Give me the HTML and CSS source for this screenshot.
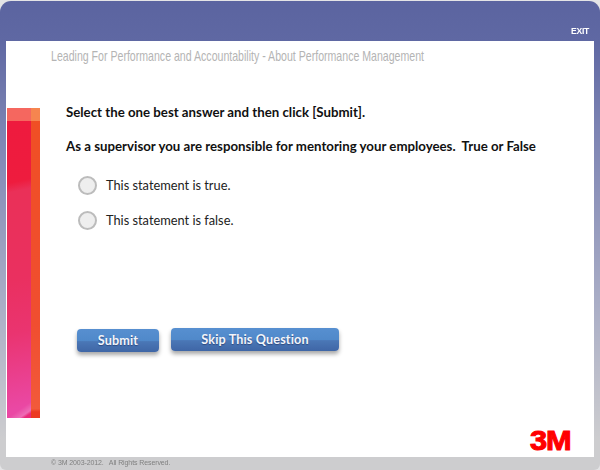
FILE: index.html
```html
<!DOCTYPE html>
<html lang="en">
<head>
<meta charset="utf-8">
<title>About Performance Management</title>
<link rel="stylesheet" href="styles.css">
</head>
<body>
<div class="frame">
  <header class="topbar"><a class="exit">EXIT</a></header>
  <main class="panel">
    <h1 class="course">Leading For Performance and Accountability - About Performance Management</h1>
    <div class="stage">
      <div class="ribbon"><div class="ribbon-main"></div><div class="ribbon-edge"></div></div>
      <section class="quiz">
        <p class="prompt">Select the one best answer and then click [Submit].</p>
        <p class="prompt question">As a supervisor you are responsible for mentoring your employees.&nbsp; True or False</p>
        <div class="options">
          <label class="option"><span class="radio"></span>This statement is true.</label>
          <label class="option"><span class="radio"></span>This statement is false.</label>
        </div>
        <div class="actions">
          <button class="btn btn-submit">Submit</button>
          <button class="btn btn-skip">Skip This Question</button>
        </div>
      </section>
    </div>
    <div class="logo">3M</div>
  </main>
  <footer class="foot">© 3M 2003-2012.&nbsp;&nbsp; All Rights Reserved.</footer>
</div>
</body>
</html>
```

FILE: styles.css
```css
html, body { margin: 0; padding: 0; background: #e4e4e6; }
.frame {
  width: 600px; height: 469px; margin-top: 1px;
  display: flex; flex-direction: column;
  border-radius: 11px 11px 6px 6px; overflow: hidden;
  background: linear-gradient(180deg, #5b64a0 0, #5f68a3 40px, #7d84b3 130px, #a9adc6 300px, #cdcdcf 440px);
  filter: blur(0.35px);
}
.topbar { height: 40px; flex: none; display: flex; justify-content: flex-end; align-items: flex-end; padding: 0 11px 5px 0; box-sizing: border-box; }
.exit { font: 700 8.6px/10px "Liberation Sans", sans-serif; letter-spacing: -0.3px; color: #fff; }
.panel { position: relative; flex: none; height: 416px; margin: 0 6px; background: #fff; display: flex; flex-direction: column; }
.course { margin: 7px 0 0 45px; width: 511px; transform: scaleX(0.73); transform-origin: left center; white-space: nowrap; font: 400 14.5px/17px "Liberation Sans", sans-serif; color: #b4b4b4; }
.stage { display: flex; margin-top: 43px; }
.ribbon { flex: none; width: 33px; height: 310px; margin-left: 1px; display: flex; position: relative; }
.ribbon::after { content: ""; position: absolute; left: 0; right: 0; top: 0; height: 13px; background: rgba(255, 210, 140, 0.42); }
.ribbon-main { width: 24px; background:
  linear-gradient(145deg, transparent 0, transparent 95%, rgba(255,255,255,0.2) 97.5%, #ea2a7a 98.5%),
  linear-gradient(168deg, #ee1a3e 0, #ee1c3e 24%, #ea3058 27%, #ea3060 55%, #ea3470 72%, #ea48a4 96%); }
.ribbon-edge { width: 9px; background: linear-gradient(180deg, #f04f24 0, #f04e30 70%, #f25a3a 97%, #ec3a22 98%); }
.quiz { flex: 1; padding-left: 26px; margin-top: -5px; }
.prompt { margin: 0; font: 700 13.25px/18px "Lato", "Liberation Sans", sans-serif; color: #111; }
.question { margin-top: 16px; }
.options { display: flex; flex-direction: column; gap: 15px; margin: 20px 0 0 12px; }
.option { display: flex; align-items: center; gap: 9px; height: 20px; font: 400 12.8px/20px "Lato", "Liberation Sans", sans-serif; color: #222; }
.radio { width: 15px; height: 15px; border: 2px solid #bcbcbc; border-radius: 50%; background: #eeeeee; flex: none; }
.actions { display: flex; align-items: flex-start; gap: 12px; margin: 98px 0 0 11px; }
.btn { border: 0; border-radius: 4px; color: #f2f5fa; font: 700 12.6px/16px "Lato", "Liberation Sans", sans-serif; text-shadow: 0 1px 1px #2f4a80; letter-spacing: 0.15px;
  background: linear-gradient(180deg, #578fd0 0, #5089ca 50%, #4a77b6 55%, #3f66a6 100%);
  box-shadow: 0 3px 4px rgba(0,0,0,0.35); padding: 1px 0 0; }
.btn-submit { width: 82px; height: 23px; margin-top: 1px; }
.btn-skip { width: 168px; height: 23px; }
.logo { position: absolute; right: 23px; bottom: 3px; font: 900 27px/26px "Liberation Sans", sans-serif; color: #f00; letter-spacing: -1px; -webkit-text-stroke: 1px #f00; transform: scaleX(1.14); transform-origin: right center; }
.foot { margin: -1px 0 0 51px; position: relative; font: 400 7px/13px "Liberation Sans", sans-serif; color: #808080; letter-spacing: -0.1px; }
```
